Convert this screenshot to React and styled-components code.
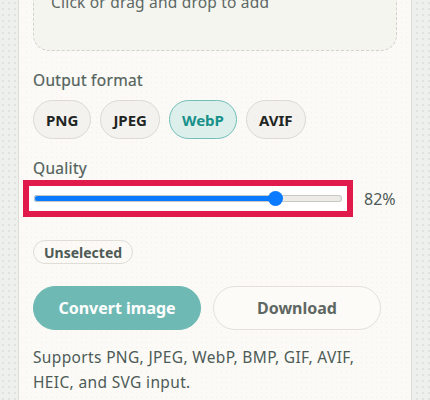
import React, { useState } from 'react';
import styled, { createGlobalStyle } from 'styled-components';

const palette = {
  page: '#edf0ed',
  card: '#fbfaf6',
  line: '#dddcd5',
  text: '#4f5d58',
  ink: '#1f2523',
  teal: '#6fb9b4',
  tealDark: '#17918a',
  tealSoft: '#ddefea',
  blue: '#0a7aff',
  mark: '#e01b4c',
};

const GlobalStyle = createGlobalStyle`
  html, body {
    margin: 0;
    padding: 0;
    height: 100%;
    overflow: hidden;
  }
  body {
    background-color: ${palette.page};
    background-image: radial-gradient(#dde3df 0.7px, transparent 1px);
    background-size: 6px 6px;
    font-family: 'Noto Sans', 'Noto Sans CJK JP', sans-serif;
    color: ${palette.text};
  }
`;

const FORMATS = ['PNG', 'JPEG', 'WebP', 'AVIF'];

const App = () => {
  const [format, setFormat] = useState('WebP');
  const [quality, setQuality] = useState(82);
  const fill = ((quality - 10) / 90) * 100;

  return (
    <>
      <GlobalStyle />
      <StyledCard>
        <DropZone>Click or drag and drop to add</DropZone>

        <Label>Output format</Label>
        <ChipRow>
          {FORMATS.map((f) => (
            <Chip key={f} $active={f === format} onClick={() => setFormat(f)}>
              {f}
            </Chip>
          ))}
        </ChipRow>

        <Label $top={19}>Quality</Label>
        <QualityRow>
          <SliderFrame>
            <Range
              type="range"
              min={10}
              max={100}
              value={quality}
              onChange={(e) => setQuality(Number(e.target.value))}
              style={{
                background: `linear-gradient(to right, ${palette.blue} ${fill}%, #ecebe7 ${fill}%)`,
              }}
            />
          </SliderFrame>
          <Value>{quality}%</Value>
        </QualityRow>

        <Badge>Unselected</Badge>

        <ButtonRow>
          <Button $primary>Convert image</Button>
          <Button>Download</Button>
        </ButtonRow>

        <Note>
          Supports PNG, JPEG, WebP, BMP, GIF, AVIF,
          <br />
          HEIC, and SVG input.
        </Note>
      </StyledCard>
    </>
  );
};

const StyledCard = styled.div`
  margin: -66px 0 0 18px;
  width: 364px;
  padding: 14px 14px 10px;
  background-color: ${palette.card};
  background-image: radial-gradient(#f1f0ea 0.7px, transparent 1px);
  background-size: 5px 5px;
  border: 1px solid ${palette.line};
  display: flex;
  flex-direction: column;
  align-items: flex-start;
`;

const DropZone = styled.div`
  box-sizing: border-box;
  width: 100%;
  height: 102px;
  padding: 42px 17px 0;
  background: #f5f5f0;
  border: 1px dashed #d3d3cc;
  border-radius: 16px;
  font-size: 15.5px;
  letter-spacing: 0.2px;
  line-height: 20px;
  color: #5d6864;
`;

const Label = styled.div`
  margin-top: ${({ $top }) => $top ?? 19}px;
  font-size: 15.5px;
  letter-spacing: 0.3px;
  line-height: 20px;
  color: #53625c;
  -webkit-text-stroke: 0.2px #53625c;
`;

const ChipRow = styled.div`
  display: flex;
  gap: 9px;
  margin-top: 10px;
`;

const Chip = styled.button`
  height: 39px;
  padding: 0 12px;
  border-radius: 20px;
  border: 1px solid ${({ $active }) => ($active ? '#72bfb9' : '#dcdad3')};
  background: ${({ $active }) => ($active ? palette.tealSoft : '#f3f2ee')};
  color: ${({ $active }) => ($active ? palette.tealDark : palette.ink)};
  font-family: inherit;
  font-size: 15px;
  font-weight: 700;
  cursor: pointer;
`;

const QualityRow = styled.div`
  display: flex;
  align-items: center;
  gap: 17px;
  margin-top: 8px;
  margin-left: -4px;
`;

const SliderFrame = styled.div`
  box-sizing: border-box;
  width: 318px;
  height: 25px;
  padding: 0 5px;
  background: #ffffff;
  outline: 6px solid ${palette.mark};
  display: flex;
  align-items: center;
`;

const Range = styled.input`
  -webkit-appearance: none;
  appearance: none;
  width: 100%;
  height: 7px;
  margin: 0;
  border-radius: 4px;
  box-shadow: inset 0 0 0 1px #c9c9c4;
  outline: none;

  &::-webkit-slider-thumb {
    -webkit-appearance: none;
    width: 15px;
    height: 15px;
    border-radius: 50%;
    background: ${palette.blue};
    border: none;
  }
`;

const Value = styled.span`
  font-size: 16px;
  color: #4f5b56;
`;

const Badge = styled.span`
  margin-top: 29px;
  height: 24px;
  box-sizing: border-box;
  padding: 0 10px;
  display: inline-flex;
  align-items: center;
  border: 1px solid #dfddd6;
  border-radius: 12px;
  font-size: 14px;
  font-weight: 700;
  color: #4e5b55;
`;

const ButtonRow = styled.div`
  display: flex;
  gap: 12px;
  margin-top: 22px;
`;

const Button = styled.button`
  width: 168px;
  height: 44px;
  border-radius: 22px;
  font-family: inherit;
  font-size: 16px;
  font-weight: 700;
  cursor: pointer;
  border: 1px solid ${({ $primary }) => ($primary ? palette.teal : '#e3e1da')};
  background: ${({ $primary }) => ($primary ? palette.teal : '#fcfbf8')};
  color: ${({ $primary }) => ($primary ? '#ffffff' : '#5f6762')};
`;

const Note = styled.p`
  margin: 15px 0 0;
  font-size: 15.5px;
  letter-spacing: 0.35px;
  line-height: 25px;
  color: #4d5b56;
`;

export default App;
